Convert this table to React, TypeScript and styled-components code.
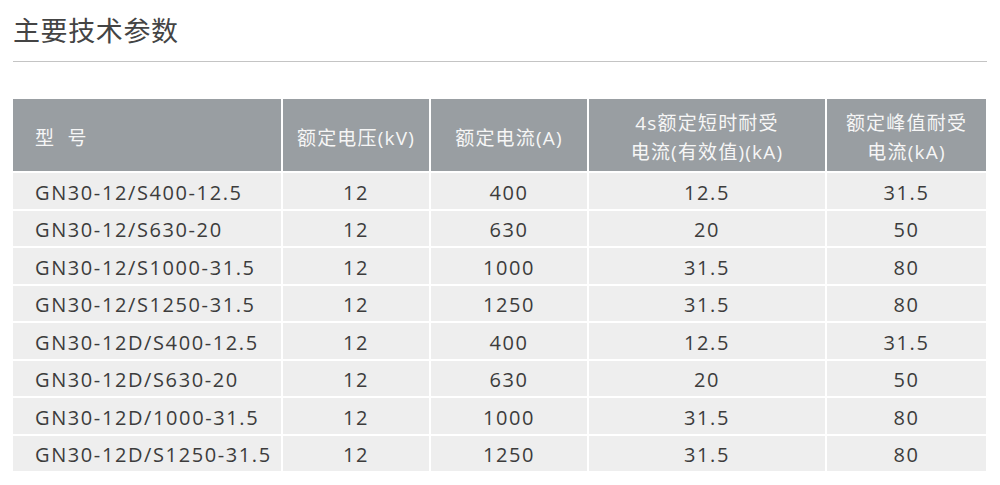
import React from 'react'
import styled, { createGlobalStyle } from 'styled-components'

const Global = createGlobalStyle`
  html, body { margin: 0; padding: 0; background: #fff; }
  body { font-family: "Open Sans", "Noto Sans CJK SC", sans-serif; }
`

const Page = styled.div`
  width: 1000px;
  height: 485px;
  padding: 0 13px 0 13px;
  box-sizing: border-box;
`

const Title = styled.h2`
  margin: 0;
  padding-top: 10px;
  height: 62px;
  box-sizing: border-box;
  font-size: 27px;
  line-height: 40px;
  font-weight: 400;
  letter-spacing: 0.6px;
  color: #444;
  font-family: "Noto Sans CJK SC", sans-serif;
  border-bottom: 1px solid #c4c4c4;
  width: 974px;
`

const Table = styled.div`
  margin-top: 37px;
  width: 973px;
  display: grid;
  grid-template-columns: 268px 146px 156px 236px 159px;
  grid-template-rows: 72px;
  grid-auto-rows: 35.5px;
  gap: 2px;
  background: #fff;
`

const Head = styled.div<{ $left?: boolean }>`
  background: #999ea2;
  color: #f6f6f6;
  font-size: 19px;
  line-height: 29px;
  letter-spacing: 1.2px;
  display: flex;
  align-items: center;
  box-sizing: border-box;
  padding-top: 6px;
  justify-content: ${p => (p.$left ? 'flex-start' : 'center')};
  text-align: center;
  padding-left: ${p => (p.$left ? '22px' : '0')};
  font-family: "Open Sans", "Noto Sans CJK SC", sans-serif;
`

const Cell = styled.div<{ $left?: boolean }>`
  background: #eeeeee;
  color: #3c3c3c;
  font-size: 20px;
  letter-spacing: 1.6px;
  display: flex;
  align-items: center;
  padding-top: 3px;
  box-sizing: border-box;
  justify-content: ${p => (p.$left ? 'flex-start' : 'center')};
  padding-left: ${p => (p.$left ? '22px' : '0')};
`

const heads = [
  ['型\u00a0\u00a0号'],
  ['额定电压(kV)'],
  ['额定电流(A)'],
  ['4s额定短时耐受', '电流(有效值)(kA)'],
  ['额定峰值耐受', '电流(kA)'],
]

const rows = [
  ['GN30-12/S400-12.5', '12', '400', '12.5', '31.5'],
  ['GN30-12/S630-20', '12', '630', '20', '50'],
  ['GN30-12/S1000-31.5', '12', '1000', '31.5', '80'],
  ['GN30-12/S1250-31.5', '12', '1250', '31.5', '80'],
  ['GN30-12D/S400-12.5', '12', '400', '12.5', '31.5'],
  ['GN30-12D/S630-20', '12', '630', '20', '50'],
  ['GN30-12D/1000-31.5', '12', '1000', '31.5', '80'],
  ['GN30-12D/S1250-31.5', '12', '1250', '31.5', '80'],
]

const App = () => {
  return (
    <Page>
      <Global />
      <Title>主要技术参数</Title>
      <Table>
        {heads.map((lines, i) => (
          <Head key={i} $left={i === 0}>
            <div>
              {lines.map((l, j) => (
                <div key={j}>{l}</div>
              ))}
            </div>
          </Head>
        ))}
        {rows.map((r, ri) =>
          r.map((v, ci) => (
            <Cell key={ri + '-' + ci} $left={ci === 0}>
              {v}
            </Cell>
          ))
        )}
      </Table>
    </Page>
  )
}

export default App
